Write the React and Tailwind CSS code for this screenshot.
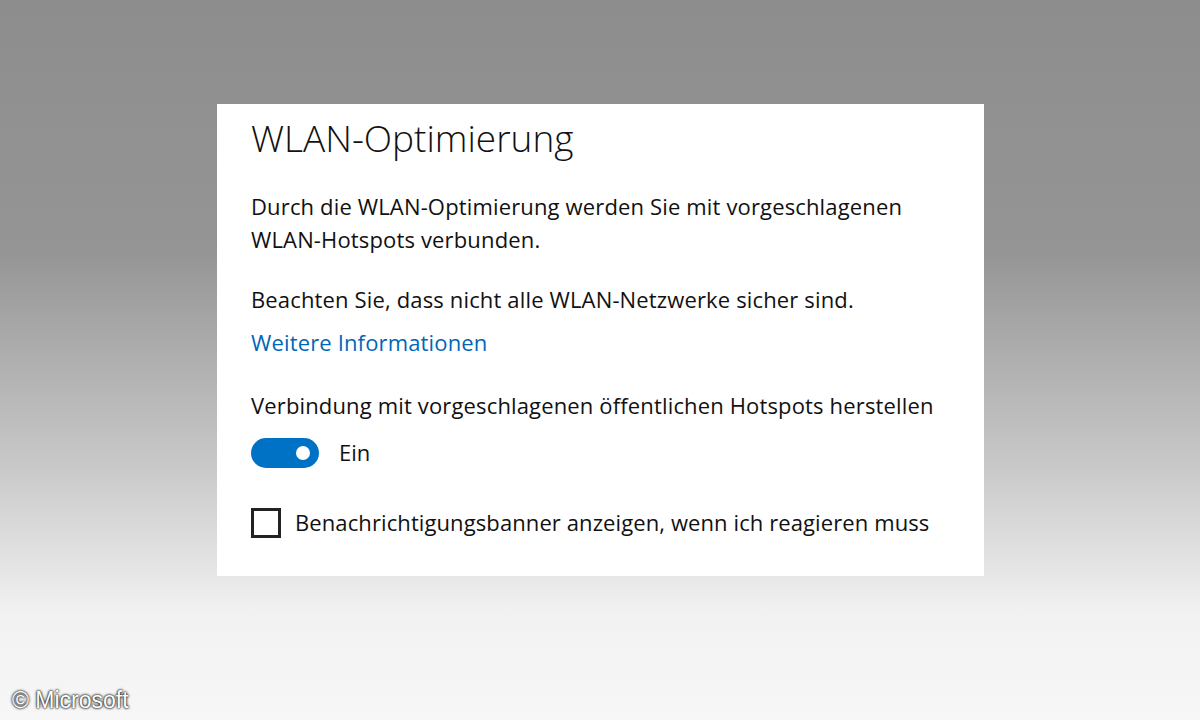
import React from "react";

const App = () => {
  return (
    <div
      className="relative w-[1200px] h-[720px] overflow-hidden flex flex-col items-center bg-[linear-gradient(to_bottom,#8d8d8d_0%,#959595_35%,#c9c9c9_65%,#f1f1f1_85%,#f7f7f7_100%)]"
      style={{ fontFamily: '"Open Sans", "Noto Sans", sans-serif' }}
    >
      <div className="mt-[104px] ml-[1px] w-[767px] h-[472px] bg-white pl-[34px] pt-[10px] text-[#111]">
        <h1 className="text-[37px] font-light leading-[48px]">WLAN-Optimierung</h1>
        <p className="mt-[28px] text-[22px] leading-[33px] tracking-[0.15px]">
          Durch die WLAN-Optimierung werden Sie mit vorgeschlagenen
          <br />
          WLAN-Hotspots verbunden.
        </p>
        <p className="mt-[27px] text-[22px] leading-[33px] tracking-[0.15px]">
          Beachten Sie, dass nicht alle WLAN-Netzwerke sicher sind.
        </p>
        <a className="block mt-[10px] text-[22px] leading-[33px] tracking-[0.15px] text-[#0067b8]">Weitere Informationen</a>
        <p className="mt-[30px] text-[22px] leading-[33px] tracking-[0.15px]">
          Verbindung mit vorgeschlagenen öffentlichen Hotspots herstellen
        </p>
        <div className="mt-[14px] flex items-center gap-[20px]">
          <div className="w-[68px] h-[30px] rounded-full bg-[#0072c6] flex items-center justify-end pr-[9px]">
            <div className="w-[14px] h-[14px] rounded-full bg-white" />
          </div>
          <span className="text-[22px] leading-[33px]">Ein</span>
        </div>
        <div className="mt-[37px] flex items-center gap-[14px]">
          <div className="w-[30px] h-[30px] border-[3px] border-[#222]" />
          <span className="text-[22px] leading-[33px] tracking-[0.1px]">
            Benachrichtigungsbanner anzeigen, wenn ich reagieren muss
          </span>
        </div>
      </div>
      <div
        className="absolute left-[12px] top-[683px] text-[23px] text-white [text-shadow:0_0_3px_#000,0_0_2px_#000]"
        style={{ fontFamily: '"Liberation Sans", Arial, sans-serif' }}
      >
        © Microsoft
      </div>
    </div>
  );
};

export default App;
